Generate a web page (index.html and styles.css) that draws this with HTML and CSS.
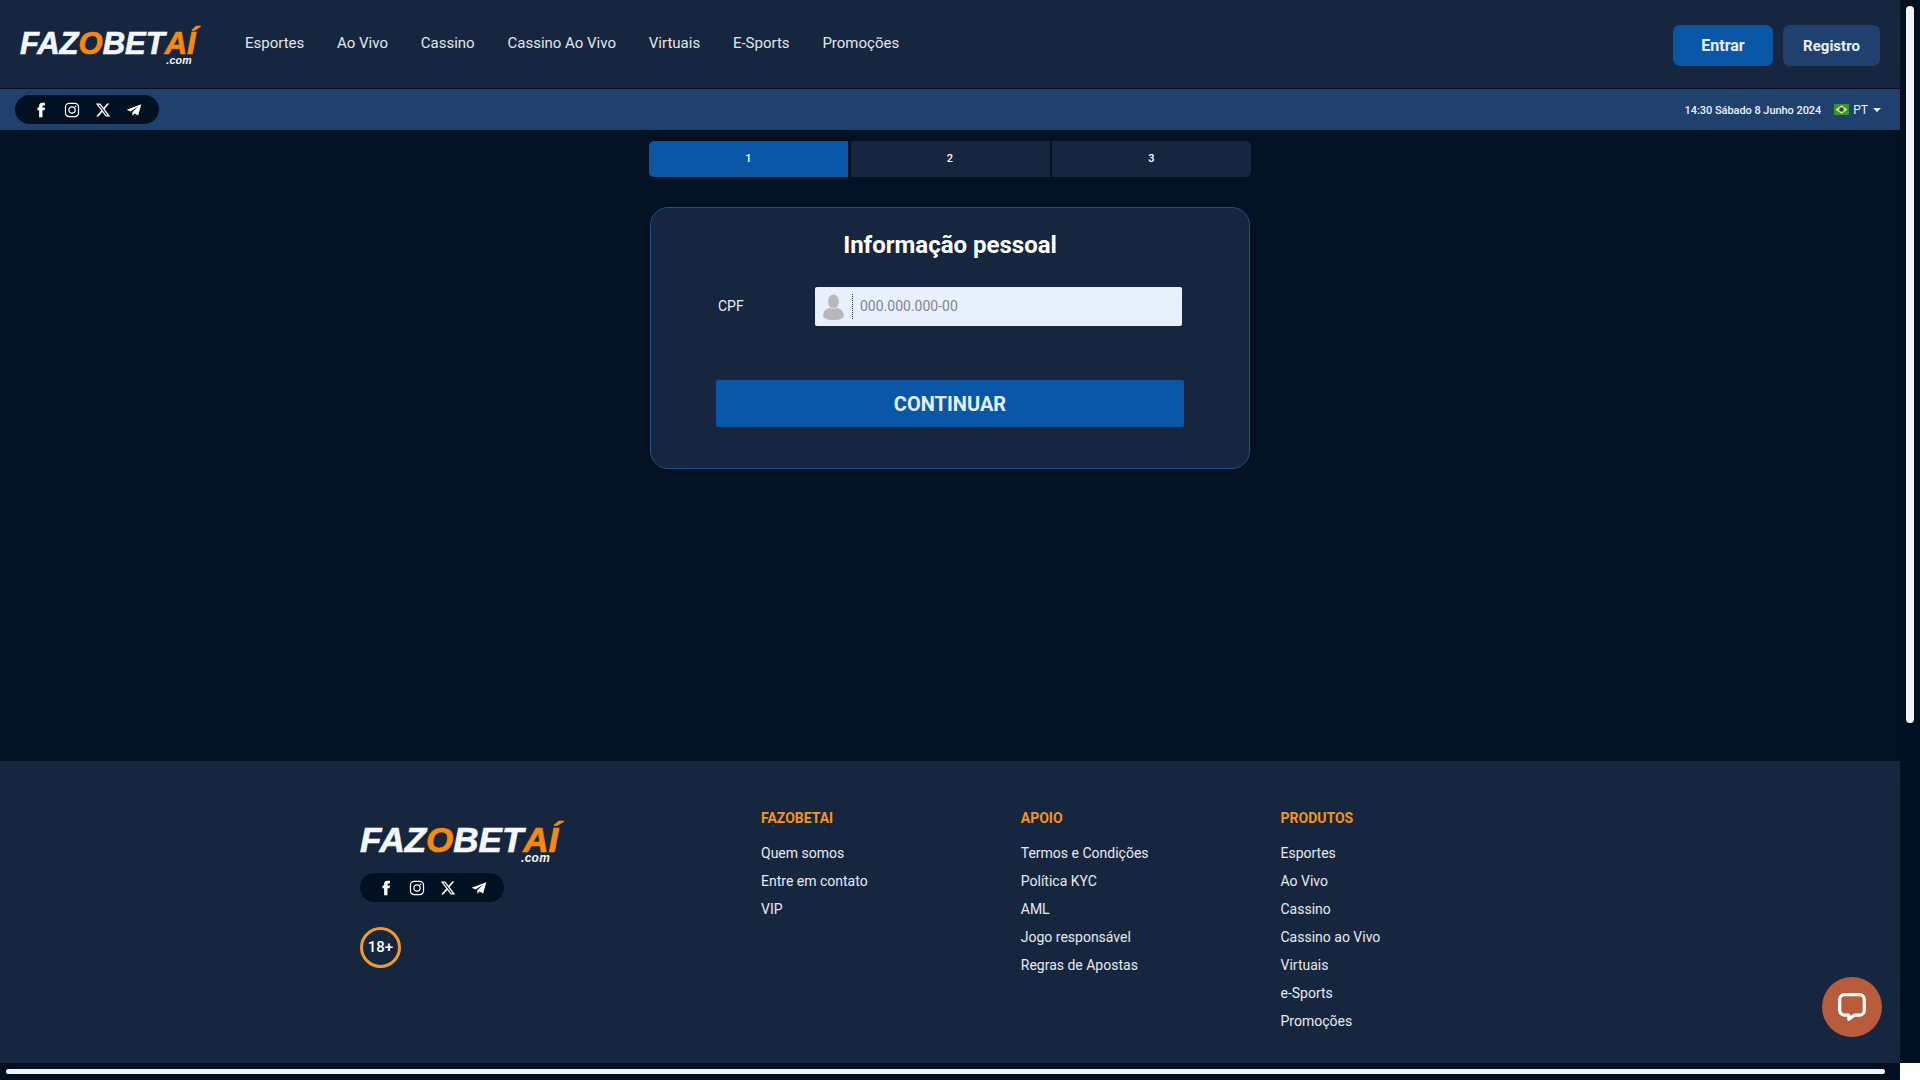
FILE: index.html
```html
<!DOCTYPE html>
<html lang="pt">
<head>
<meta charset="utf-8">
<title>FazoBetAí</title>
<link rel="stylesheet" href="styles.css">
</head>
<body>
<svg class="defs" width="0" height="0" aria-hidden="true">
  <symbol id="i-fb" viewBox="0 0 24 24"><path fill="#fff" d="M14.2 8.3V6.4c0-.9.6-1.2 1.1-1.2h2.6V1.2h-3.7C10.200 1.200 9.200 4 9.200 5.900v2.400H6.700v4.100h2.500v10.400h5V12.400h3.300l.4-4.100z"/></symbol>
  <symbol id="i-ig" viewBox="0 0 24 24"><rect x="2.200" y="2.200" width="19.600" height="19.600" rx="5.500" fill="none" stroke="#fff" stroke-width="1.800"/><circle cx="12" cy="12" r="4.700" fill="none" stroke="#fff" stroke-width="1.800"/><circle cx="17.500" cy="6.500" r="1.200" fill="#fff"/></symbol>
  <symbol id="i-x" viewBox="0 0 24 24"><path fill="#fff" d="M18.244 2.250h3.308l-7.227 8.260 8.502 11.240H16.170l-5.214-6.817L4.990 21.750H1.680l7.730-8.835L1.254 2.250H8.080l4.713 6.231zm-1.161 17.520h1.833L7.084 4.126H5.117z"/></symbol>
  <symbol id="i-tg" viewBox="0 0 24 24"><path fill="#fff" d="M23 3.500 1 11.800l6 2.500L18.500 6.500 9.500 15.400v5.300l3.400-3.500 5.300 3.200z"/></symbol>
</svg>

<div class="viewport">
  <div class="page">
    <header class="topbar">
      <a class="logo logo-top"><span>FAZ</span><b>O</b><span>BET</span><b>AÍ</b><i>.com</i></a>
      <nav class="nav">
        <a>Esportes</a><a>Ao Vivo</a><a>Cassino</a><a>Cassino Ao Vivo</a><a>Virtuais</a><a>E-Sports</a><a>Promoções</a>
      </nav>
      <div class="auth">
        <button class="btn btn-login">Entrar</button>
        <button class="btn btn-register">Registro</button>
      </div>
    </header>

    <div class="subbar">
      <div class="social">
        <svg><use href="#i-fb"/></svg><svg><use href="#i-ig"/></svg><svg><use href="#i-x"/></svg><svg><use href="#i-tg"/></svg>
      </div>
      <div class="status">
        <span class="clock">14:30 Sábado 8 Junho 2024</span>
        <span class="lang">
          <svg class="flag" viewBox="0 0 15 11"><rect width="15" height="11" fill="#2f9a35"/><path d="M7.500 1.300 13.500 5.500 7.500 9.700 1.500 5.500z" fill="#f4e04d"/><circle cx="7.500" cy="5.500" r="2.300" fill="#24408e"/></svg>
          PT<span class="caret"></span>
        </span>
      </div>
    </div>

    <main class="content">
      <div class="steps">
        <div class="step active">1</div><div class="step">2</div><div class="step">3</div>
      </div>
      <form class="card">
        <h1 class="card-title">Informação pessoal</h1>
        <div class="field">
          <label class="field-label" for="cpf">CPF</label>
          <div class="input-wrap">
            <svg class="person" viewBox="0 0 24 30"><ellipse cx="12" cy="8.500" rx="6.200" ry="8" fill="#b8b8b8"/><path d="M0 25c0-6 5-8 8-9 2 1.500 6 1.500 8 0 3 1 8 3 8 9 0 3-5 5-12 5S0 28 0 25z" fill="#b8b8b8"/></svg>
            <input class="input" id="cpf" placeholder="000.000.000-00">
          </div>
        </div>
        <button class="submit" type="button">CONTINUAR</button>
      </form>
    </main>

    <footer class="footer">
      <div class="footer-brand">
        <a class="logo logo-foot"><span>FAZ</span><b>O</b><span>BET</span><b>AÍ</b><i>.com</i></a>
        <div class="social">
          <svg><use href="#i-fb"/></svg><svg><use href="#i-ig"/></svg><svg><use href="#i-x"/></svg><svg><use href="#i-tg"/></svg>
        </div>
        <div class="age">18+</div>
      </div>
      <div class="fcol">
        <h4>FAZOBETAI</h4>
        <a>Quem somos</a><a>Entre em contato</a><a>VIP</a>
      </div>
      <div class="fcol">
        <h4>APOIO</h4>
        <a>Termos e Condições</a><a>Política KYC</a><a>AML</a><a>Jogo responsável</a><a>Regras de Apostas</a>
      </div>
      <div class="fcol">
        <h4>PRODUTOS</h4>
        <a>Esportes</a><a>Ao Vivo</a><a>Cassino</a><a>Cassino ao Vivo</a><a>Virtuais</a><a>e-Sports</a><a>Promoções</a>
      </div>
    </footer>
  </div>

  <div class="vtrack"><div class="vthumb"></div></div>
  <div class="htrack"><div class="hthumb"></div></div>
  <div class="corner"></div>

  <button class="chat" aria-label="Chat">
    <svg viewBox="0 0 28 28"><path d="M7 2.500h14a4.500 4.500 0 0 1 4.500 4.500v10a4.500 4.500 0 0 1-4.500 4.500h-4.500L11 25.500v-4H7A4.500 4.500 0 0 1 2.500 17V7A4.500 4.500 0 0 1 7 2.500z" fill="none" stroke="#fff" stroke-width="3" stroke-linejoin="round"/></svg>
  </button>
</div>
</body>
</html>
```

FILE: styles.css
```css
* { box-sizing: border-box; }
html, body { margin: 0; height: 100%; overflow: hidden; }
body { font-family: Roboto, "Liberation Sans", sans-serif; background: #021222; color: #fff; }
.defs { position: absolute; }

.viewport {
  position: relative;
  height: 1080px;
  display: grid;
  grid-template-columns: 1900px 20px;
  grid-template-rows: 1063px 17px;
}
.page { display: flex; flex-direction: column; min-height: 0; }

/* top bar */
.topbar {
  height: 89px;
  flex: none;
  display: flex;
  align-items: flex-start;
  background: #15263e;
  border-bottom: 1px solid #021122;
  padding-left: 20px;
}
.logo {
  display: flex;
  position: relative;
  font-family: "Liberation Sans", Arial, sans-serif;
  font-style: italic;
  font-weight: 700;
  color: #f4f6f8;
  white-space: nowrap;
  -webkit-text-stroke: 0.7px currentColor;
}
.logo b { color: #f7890f; font-weight: 700; }
.logo i {
  position: absolute;
  font-size: 0.34em;
  line-height: 1;
  letter-spacing: 0.3px;
  -webkit-text-stroke: 0;
}
.logo-top { font-size: 31px; line-height: 36px; margin-top: 26px; width: 178px; }
.logo-top i { right: 6px; bottom: -4px; }
.logo-foot { font-size: 35px; line-height: 44px; margin-top: 7px; width: 200px; }
.logo-foot i { right: 10px; bottom: -3px; }

.nav {
  display: flex;
  gap: 32.800px;
  margin-left: 47px;
  margin-top: 34px;
  font-size: 15px;
  line-height: 18px;
  color: #e4e6ea;
}
.auth { margin-left: auto; display: flex; gap: 10px; margin-top: 25px; padding-right: 20px; }
.btn {
  height: 41px;
  border: 0;
  border-radius: 7px;
  font: 700 15px Roboto, sans-serif;
  color: #e6f0fb;
}
.btn-login { width: 100px; background: #0a57a8; font-size: 16px; }
.btn-register { width: 97px; background: #20406d; }

/* sub bar */
.subbar {
  height: 41px;
  flex: none;
  display: flex;
  align-items: center;
  justify-content: space-between;
  background: #20406d;
  padding: 0 19px 0 15px;
}
.social {
  width: 144px;
  height: 29px;
  display: flex;
  align-items: center;
  gap: 15px;
  padding-left: 18px;
  border-radius: 15px;
  background: #021122;
}
.social svg { width: 16px; height: 16px; flex: none; }
.status { display: flex; align-items: center; gap: 13px; font-size: 11px; color: #eef2f7; }
.clock { padding-top: 2px; font-weight: 500; letter-spacing: -0.05px; }
.lang { display: flex; align-items: center; gap: 4px; font-size: 12px; }
.flag { width: 15px; height: 11px; display: block; }
.caret {
  width: 0; height: 0;
  margin-left: 1px;
  border-left: 4.500px solid transparent;
  border-right: 4.500px solid transparent;
  border-top: 4.500px solid #eef2f7;
}

/* main */
.content {
  flex: 1;
  min-height: 0;
  display: flex;
  flex-direction: column;
  align-items: center;
  padding-top: 11px;
}
.steps { width: 602px; display: flex; gap: 2.500px; border-radius: 5px; overflow: hidden; }
.step {
  flex: 1;
  height: 36px;
  padding-bottom: 2px;
  display: flex;
  align-items: center;
  justify-content: center;
  background: #15263e;
  font-size: 11px;
  font-weight: 500;
}
.step.active { background: #0a57a8; }

.card {
  width: 600px;
  height: 262px;
  margin-top: 30px;
  padding: 21px 65px 0;
  background: #15263e;
  border: 1px solid #1c4f8f;
  border-radius: 18px;
}
.card-title {
  margin: 0;
  text-align: center;
  font-size: 24px;
  line-height: 32px;
  font-weight: 700;
}
.field { display: flex; align-items: center; margin-top: 26px; }
.field-label { width: 99px; padding: 0 0 2px 2px; font-size: 14px; color: #eceff3; }
.input-wrap {
  width: 367px;
  height: 39px;
  display: flex;
  align-items: center;
  background: #e8f0fe;
  border-radius: 2px;
  padding-left: 7px;
}
.person { width: 23px; height: 26px; flex: none; }
.input {
  flex: 1;
  min-width: 0;
  height: 25px;
  margin-left: 7px;
  padding: 0 0 2px 7px;
  border: 0;
  border-left: 1px dotted #15263e;
  outline: 0;
  background: transparent;
  font: 14px Roboto, sans-serif;
  color: #333;
}
.input::placeholder { color: #80868e; opacity: 1; }
.submit {
  display: block;
  width: 468px;
  height: 47px;
  margin: 54px 0 0;
  border: 0;
  border-radius: 2px;
  background: #0a57a8;
  color: #e6f0fb;
  font: 700 20px Roboto, sans-serif;
}

/* footer */
.footer {
  height: 302px;
  flex: none;
  display: flex;
  padding: 50px 0 0 360px;
  background: #15263e;
}
.footer-brand { width: 401px; display: flex; flex-direction: column; align-items: flex-start; }
.footer-brand .social { margin-top: 11px; }
.age {
  width: 41px;
  height: 41px;
  margin-top: 25px;
  padding-bottom: 1px;
  display: flex;
  align-items: center;
  justify-content: center;
  border: 3px solid #f29a2e;
  border-radius: 50%;
  font-size: 15px;
  font-weight: 500;
}
.fcol { width: 259.750px; display: flex; flex-direction: column; font-size: 14px; line-height: 28px; color: #e9ebee; }
.fcol:last-child { width: auto; }
.fcol h4 {
  margin: 0 0 14px;
  font-size: 14px;
  line-height: 14px;
  font-weight: 700;
  color: #f7931e;
}

/* scrollbars */
.vtrack { background: #021122; padding: 6px 6px 0; }
.vthumb { width: 8px; height: 717px; background: #f1f3f6; border-radius: 4px; }
.htrack { background: #021122; padding: 6px 15px 0 6px; }
.hthumb { height: 5px; background: #f1f3f6; border-radius: 3px; }
.corner { background: #fff; }

/* live chat bubble */
.chat {
  position: absolute;
  right: 38px;
  bottom: 43px;
  width: 60px;
  height: 60px;
  padding: 0;
  border: 0;
  border-radius: 50%;
  background: #b95c3c;
  display: flex;
  align-items: center;
  justify-content: center;
}
.chat svg { width: 30px; height: 30px; }
```
